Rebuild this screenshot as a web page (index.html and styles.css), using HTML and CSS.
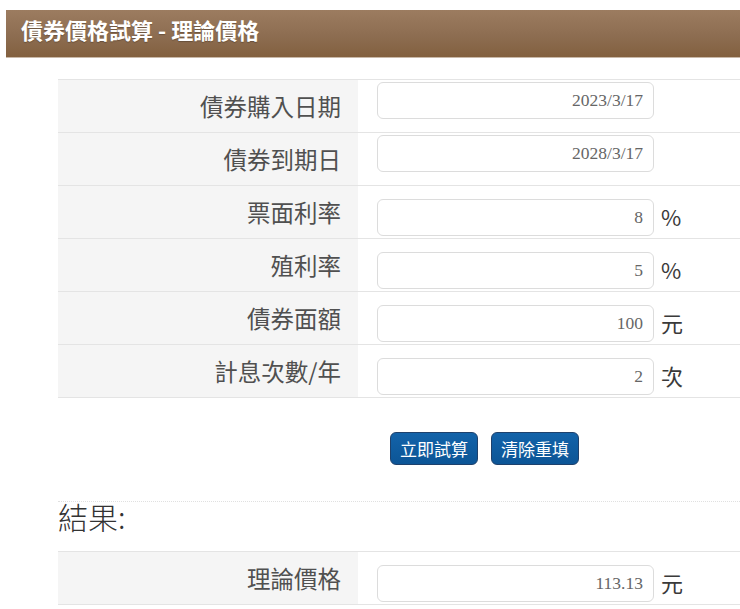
FILE: index.html
```html
<!DOCTYPE html>
<html lang="zh-Hant">
<head>
<meta charset="utf-8">
<title>債券價格試算 - 理論價格</title>
<link rel="stylesheet" href="styles.css">
</head>
<body>
<div class="header"><h1 class="title">債券價格試算 - 理論價格</h1></div>

<div class="form">
  <div class="row row-top">
    <div class="label">債券購入日期</div>
    <div class="value"><div class="input">2023/3/17</div></div>
  </div>
  <div class="row row-top">
    <div class="label">債券到期日</div>
    <div class="value"><div class="input">2028/3/17</div></div>
  </div>
  <div class="row">
    <div class="label">票面利率</div>
    <div class="value"><div class="input">8</div><span class="unit">%</span></div>
  </div>
  <div class="row">
    <div class="label">殖利率</div>
    <div class="value"><div class="input">5</div><span class="unit">%</span></div>
  </div>
  <div class="row">
    <div class="label">債券面額</div>
    <div class="value"><div class="input">100</div><span class="unit">元</span></div>
  </div>
  <div class="row row-last">
    <div class="label">計息次數/年</div>
    <div class="value"><div class="input">2</div><span class="unit">次</span></div>
  </div>
</div>

<div class="actions">
  <button class="btn">立即試算</button>
  <button class="btn">清除重填</button>
</div>

<h2 class="result-title">結果:</h2>

<div class="form result">
  <div class="row row-last">
    <div class="label">理論價格</div>
    <div class="value"><div class="input">113.13</div><span class="unit">元</span></div>
  </div>
</div>
</body>
</html>
```

FILE: styles.css
```css
html, body {
  margin: 0;
  padding: 0;
  background: #ffffff;
  font-family: "Noto Sans CJK TC", "Noto Sans", sans-serif;
  overflow: hidden;
}

.header {
  margin: 10px 0 0 6px;
  height: 48px;
  background: linear-gradient(to bottom, #9c7c60 0%, #8d6d51 55%, #82603f 100%);
  border-bottom: 1px solid #c9b8a8;
  box-sizing: border-box;
}

.title {
  margin: 0;
  padding: 0 0 0 15px;
  font-size: 22px;
  font-weight: 700;
  line-height: 38px;
  color: #ffffff;
  text-shadow: 0 1px 1px rgba(0, 0, 0, 0.25);
  white-space: nowrap;
}

.form {
  margin: 21px 0 0 58px;
}

.row {
  display: flex;
  height: 53px;
  border-top: 1px solid #e4e4e4;
  box-sizing: border-box;
}

.row-last {
  height: 54px;
  border-bottom: 1px solid #e4e4e4;
}

.label {
  width: 300px;
  flex: none;
  background: #f5f5f5;
  display: flex;
  align-items: center;
  justify-content: flex-end;
  padding-right: 17px;
  box-sizing: border-box;
  font-size: 23.5px;
  font-weight: 400;
  color: #505050;
}

.value {
  flex: 1;
  display: flex;
  align-items: flex-start;
  padding: 13px 0 0 19px;
}

.row-top .value {
  padding-top: 2px;
}

.input {
  width: 277px;
  height: 37px;
  box-sizing: border-box;
  border: 1px solid #dcdcdc;
  border-radius: 6px;
  background: #ffffff;
  font-family: "Liberation Serif", "DejaVu Serif", serif;
  font-size: 17.5px;
  color: #666666;
  text-align: right;
  padding-right: 10px;
  line-height: 35px;
}

.unit {
  margin-left: 7px;
  font-size: 22px;
  font-weight: 400;
  line-height: 35px;
  color: #3a3a3a;
}

.actions {
  display: flex;
  gap: 13px;
  margin-top: 34px;
  padding-left: 390px;
}

.btn {
  width: 88px;
  height: 33px;
  padding: 0;
  border: 1px solid #1e416c;
  border-radius: 6px;
  background: linear-gradient(to bottom, #1363a9 0%, #0c5596 100%);
  color: #ffffff;
  font-family: "Noto Sans CJK TC", "Noto Sans", sans-serif;
  font-size: 17px;
  font-weight: 400;
  line-height: 31px;
}

.result-title {
  margin: 36px 0 0 58px;
  border-top: 1px dotted #e0e0e0;
  padding: 0 0 21px 0;
  font-size: 30px;
  font-weight: 300;
  line-height: 28px;
  color: #333333;
}

.result {
  margin-top: 0;
}
```
